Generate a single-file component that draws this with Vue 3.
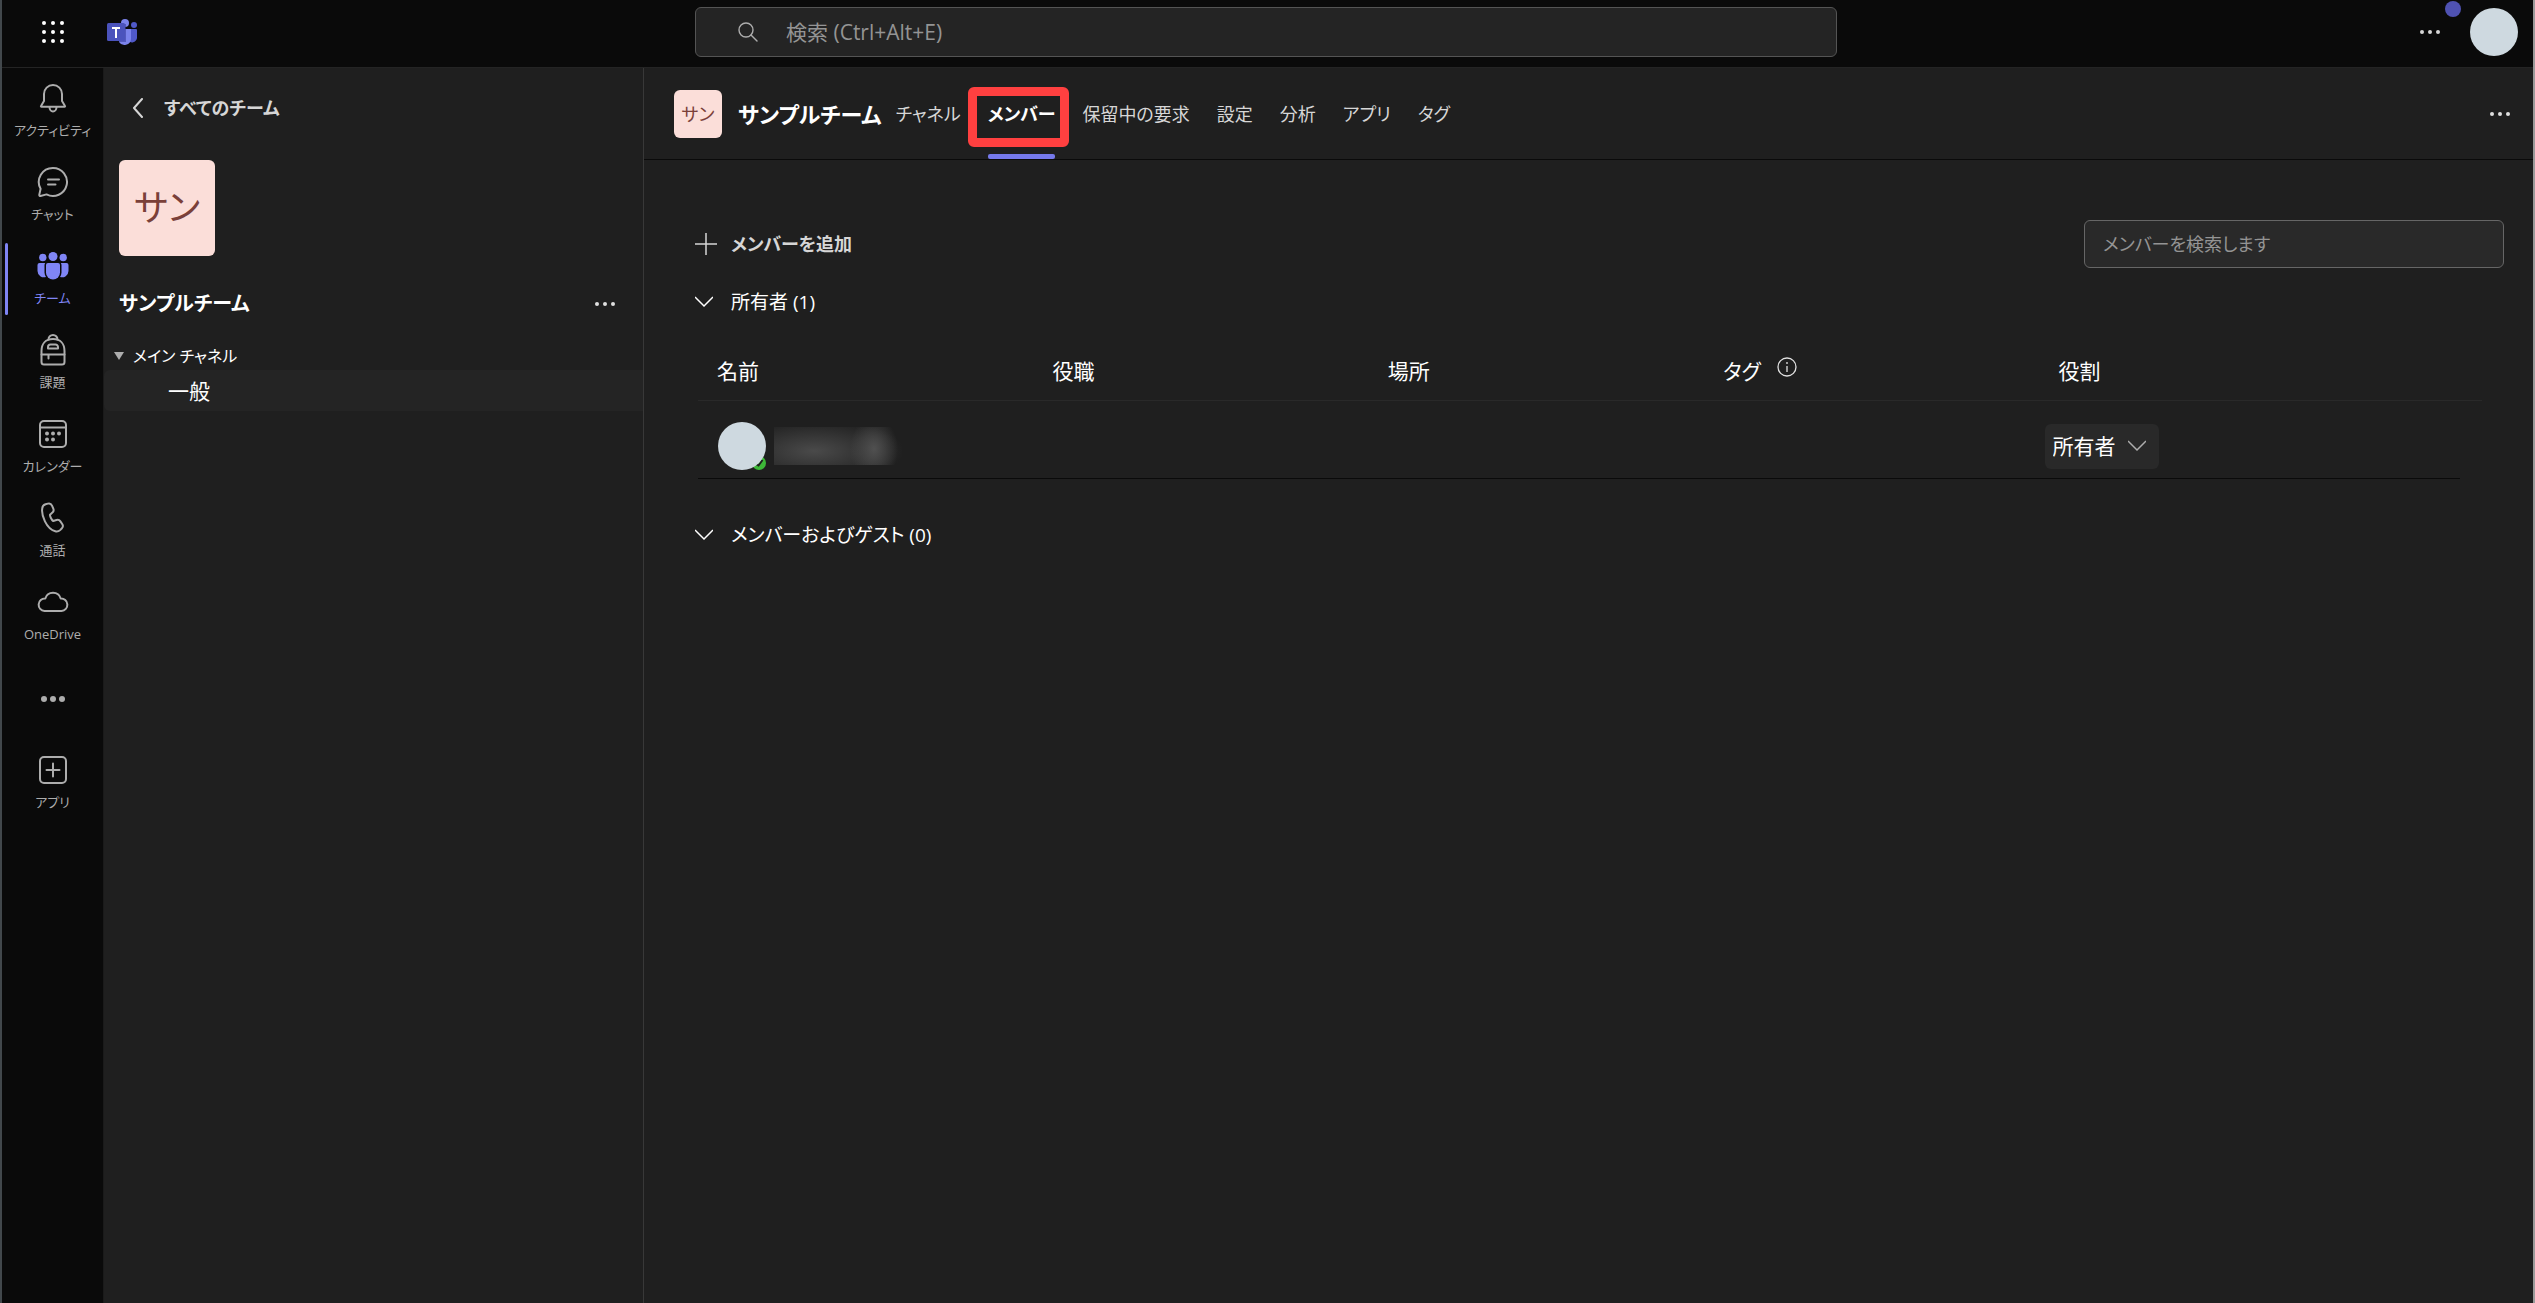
<template>
  <div class="app">
    <header class="topbar">
      <div class="topbar-left">
        <button class="icon-btn waffle" aria-label="アプリ起動ツール">
          <svg width="24" height="24" viewBox="0 0 24 24" fill="#fff">
            <template v-for="y in [3, 12, 21]" :key="y">
              <circle v-for="x in [3, 12, 21]" :key="x" :cx="x" :cy="y" r="2" />
            </template>
          </svg>
        </button>
        <svg class="logo" width="30" height="28" viewBox="0 0 30 28">
          <circle cx="27" cy="7" r="3" fill="#5059c9" />
          <path d="M20 11h9a1 1 0 0 1 1 1v7a5 5 0 0 1-7 5z" fill="#5059c9" />
          <circle cx="18" cy="5" r="4" fill="#7b83eb" />
          <path d="M12 11h12v10a6.500 6.500 0 0 1-12 3z" fill="#7b83eb" />
          <rect x="12" y="6" width="7" height="18" fill="#3a3f9e" opacity="0.6" />
          <rect x="0" y="5" width="18" height="18" rx="1.500" fill="#4b53bc" />
          <path d="M5 9h8v2h-3v9H8v-9H5z" fill="#fff" />
        </svg>
      </div>
      <label class="search">
        <svg width="20" height="20" viewBox="0 0 20 20" fill="none" stroke="#adadad" stroke-width="1.400">
          <circle cx="8" cy="8" r="7" />
          <path d="M13 13l6 6" stroke-linecap="round" />
        </svg>
        <input type="text" placeholder="検索 (Ctrl+Alt+E)" aria-label="検索" />
      </label>
      <div class="topbar-right">
        <button class="icon-btn" aria-label="設定など">
          <svg width="20" height="6" viewBox="0 0 20 6" fill="#d6d6d6">
            <circle cx="2" cy="3" r="2" /><circle cx="10" cy="3" r="2" /><circle cx="18" cy="3" r="2" />
          </svg>
        </button>
        <button class="icon-btn me" aria-label="プロファイル"></button>
        <span class="notice-dot"></span>
      </div>
    </header>

    <div class="body">
      <nav class="rail">
        <a
          v-for="item in railItems"
          :key="item.id"
          href="#"
          class="rail-item"
          :class="{ active: item.id === 'teams' }"
          :aria-label="item.label || 'その他'"
        >
          <svg width="32" height="32" viewBox="0 0 32 32" fill="none" stroke="currentColor" stroke-width="2" stroke-linecap="round" stroke-linejoin="round">
            <g v-if="item.id === 'activity'">
              <path d="M7 12a9 9 0 0 1 18 0v7l3 5a.5.500 0 0 1-.5.800h-23A.5.500 0 0 1 4 24l3-5z" />
              <path d="M12.500 25a3.500 4.500 0 0 0 7 0" />
            </g>
            <g v-else-if="item.id === 'chat'">
              <path d="M16 2a14 14 0 1 1-6.500 26.400L3.500 30a1 1 0 0 1-1.200-1.200l1.300-6A14 14 0 0 1 16 2z" />
              <path d="M11 13.500h11M11 18.500h7.500" />
            </g>
            <g v-else-if="item.id === 'teams'" fill="currentColor" stroke="none">
              <circle cx="16" cy="6.500" r="4.500" />
              <circle cx="5.800" cy="7.500" r="3.700" />
              <circle cx="26.200" cy="7.500" r="3.700" />
              <path d="M11 13h10a2 2 0 0 1 2 2v7.500a7 7 0 0 1-14 0V15a2 2 0 0 1 2-2z" />
              <path d="M2.500 13h5.700a4 4 0 0 0-.700 2v7.500a8.500 8.500 0 0 0 1.500 4.500A6.500 6.500 0 0 1 .5 21v-6a2 2 0 0 1 2-2z" />
              <path d="M29.500 13h-5.700a4 4 0 0 1 .7 2v7.500a8.500 8.500 0 0 1-1.500 4.500 6.500 6.500 0 0 0 8.500-6v-6a2 2 0 0 0-2-2z" />
            </g>
            <g v-else-if="item.id === 'tasks'">
              <path d="M4.500 17c0-7 4-12 11.500-12s11.500 5 11.500 12v11a2.500 2.500 0 0 1-2.500 2.500H7A2.500 2.500 0 0 1 4.500 28z" />
              <path d="M11.500 5.500a4.500 4.500 0 0 1 9 0M4.500 20.500h23M11.500 20.500v4" />
              <path d="M13.500 10.500h5a2.500 2.500 0 0 1 2.500 2.500v1.500H11V13a2.500 2.500 0 0 1 2.500-2.500z" />
            </g>
            <g v-else-if="item.id === 'calendar'">
              <rect x="3" y="3" width="26" height="26" rx="4" />
              <path d="M3 9.500h26" />
              <g fill="currentColor" stroke="none">
                <circle cx="10" cy="15.500" r="2" /><circle cx="16" cy="15.500" r="2" /><circle cx="22" cy="15.500" r="2" />
                <circle cx="10" cy="21.500" r="2" /><circle cx="16" cy="21.500" r="2" />
              </g>
            </g>
            <path
              v-else-if="item.id === 'calls'"
              d="M8.500 2.300l2.300-.7a3.500 3.500 0 0 1 4.200 2l1.300 3a3.500 3.500 0 0 1-.9 4l-2.400 2.200c-.5.500 1.500 5.300 3.200 6.200l3.300-1a3.500 3.500 0 0 1 3.900 1.400l1.800 2.600a3.500 3.500 0 0 1-.5 4.500l-1.600 1.600a5 5 0 0 1-4.800 1.200C9 26.500 4.300 13 5.200 6.800a5 5 0 0 1 3.300-4.500z"
            />
            <path
              v-else-if="item.id === 'onedrive'"
              d="M8.300 12.500a8 8 0 0 1 15.400 0 6.200 6.200 0 0 1 .8 12.500h-17a6.200 6.200 0 0 1 .8-12.500z"
            />
            <g v-else-if="item.id === 'more'" fill="currentColor" stroke="none">
              <circle cx="7" cy="16" r="3" /><circle cx="16" cy="16" r="3" /><circle cx="25" cy="16" r="3" />
            </g>
            <g v-else>
              <rect x="3" y="3" width="26" height="26" rx="4" />
              <path d="M16 9.500v13M9.500 16h13" />
            </g>
          </svg>
          <span v-if="item.label">{{ item.label }}</span>
        </a>
      </nav>

      <aside class="side">
        <button class="back">
          <svg width="12" height="20" viewBox="0 0 12 20" fill="none" stroke="#d6d6d6" stroke-width="2" stroke-linecap="round" stroke-linejoin="round">
            <path d="M10 1L2 10l8 9" />
          </svg>
          <span>すべてのチーム</span>
        </button>
        <div class="team-avatar large">サン</div>
        <div class="team-row">
          <h2>サンプルチーム</h2>
          <button class="icon-btn" aria-label="その他のオプション">
            <svg width="20" height="6" viewBox="0 0 20 6" fill="#e0e0e0">
              <circle cx="2" cy="3" r="2" /><circle cx="10" cy="3" r="2" /><circle cx="18" cy="3" r="2" />
            </svg>
          </button>
        </div>
        <button class="group">
          <svg width="10" height="8" viewBox="0 0 10 8" fill="#adadad"><path d="M0 0h10L5 8z" /></svg>
          <span>メイン チャネル</span>
        </button>
        <a href="#" class="channel">一般</a>
      </aside>

      <main class="main">
        <div class="team-header">
          <div class="team-avatar">サン</div>
          <h1>サンプルチーム</h1>
          <nav class="tabs">
            <a v-for="tab in tabs" :key="tab" href="#" class="tab" :class="{ selected: tab === currentTab }">{{ tab }}</a>
          </nav>
          <button class="icon-btn header-more" aria-label="その他のオプション">
            <svg width="20" height="6" viewBox="0 0 20 6" fill="#e0e0e0">
              <circle cx="2" cy="3" r="2" /><circle cx="10" cy="3" r="2" /><circle cx="18" cy="3" r="2" />
            </svg>
          </button>
        </div>

        <div class="content">
          <div class="toolbar">
            <button class="add">
              <svg width="22" height="22" viewBox="0 0 22 22" fill="none" stroke="#d6d6d6" stroke-width="1.500">
                <path d="M11 0v22M0 11h22" />
              </svg>
              <span>メンバーを追加</span>
            </button>
            <input class="member-search" type="text" placeholder="メンバーを検索します" aria-label="メンバーを検索します" />
          </div>

          <button class="section-toggle">
            <svg width="18" height="12" viewBox="0 0 18 12" fill="none" stroke="#fff" stroke-width="1.500"><path d="M0 1l9 9 9-9" /></svg>
            <span>所有者 (1)</span>
          </button>

          <table class="members">
            <thead>
              <tr>
                <th v-for="col in columns" :key="col">
                  <span class="th-inner">
                    {{ col }}
                    <svg v-if="col === 'タグ'" width="20" height="20" viewBox="0 0 20 20" fill="none" stroke="#e0e0e0" stroke-width="1.300">
                      <circle cx="10" cy="10" r="9" />
                      <path d="M10 9v6M10 5v2" />
                    </svg>
                  </span>
                </th>
              </tr>
            </thead>
            <tbody>
              <tr>
                <td>
                  <div class="person">
                    <svg width="48" height="48" viewBox="0 0 48 48">
                      <circle cx="41" cy="41" r="7" fill="#3db838" />
                      <path d="M38 42l2.500 1.500 4-5.500" fill="none" stroke="#1f1f1f" stroke-width="2" />
                      <circle cx="24" cy="24" r="24" fill="#ced9e0" />
                    </svg>
                    <span class="hidden-name"></span>
                  </div>
                </td>
                <td></td>
                <td></td>
                <td></td>
                <td>
                  <span class="role">
                    <select aria-label="役割">
                      <option>所有者</option>
                      <option>メンバー</option>
                    </select>
                    <svg width="18" height="12" viewBox="0 0 18 12" fill="none" stroke="#adadad" stroke-width="1.500"><path d="M0 1l9 9 9-9" /></svg>
                  </span>
                </td>
              </tr>
            </tbody>
          </table>

          <button class="section-toggle">
            <svg width="18" height="12" viewBox="0 0 18 12" fill="none" stroke="#fff" stroke-width="1.500"><path d="M0 1l9 9 9-9" /></svg>
            <span>メンバーおよびゲスト (0)</span>
          </button>
        </div>
      </main>
    </div>
  </div>
</template>

<script setup>
import { ref } from 'vue'

const railItems = [
  { id: 'activity', label: 'アクティビティ' },
  { id: 'chat', label: 'チャット' },
  { id: 'teams', label: 'チーム' },
  { id: 'tasks', label: '課題' },
  { id: 'calendar', label: 'カレンダー' },
  { id: 'calls', label: '通話' },
  { id: 'onedrive', label: 'OneDrive' },
  { id: 'more', label: '' },
  { id: 'apps', label: 'アプリ' }
]

const tabs = ['チャネル', 'メンバー', '保留中の要求', '設定', '分析', 'アプリ', 'タグ']
const currentTab = ref('メンバー')

const columns = ['名前', '役職', '場所', 'タグ', '役割']
</script>

<style>
body {
  background: #1f1f1f;
}
</style>

<style scoped>
.app {
  box-sizing: border-box;
  min-height: 100vh;
  display: flex;
  flex-direction: column;
  border-left: 2px solid #42484c;
  border-right: 2px solid #9a9a9a;
  background: #1f1f1f;
  color: #fff;
  font-family: 'Open Sans', 'Noto Sans CJK JP', sans-serif;
  font-size: 21px;
  line-height: 28px;
  font-feature-settings: 'palt';
}

.app *,
.app *::before,
.app *::after {
  box-sizing: border-box;
}

button,
input,
select {
  font: inherit;
  font-feature-settings: inherit;
  color: inherit;
  background: none;
  border: 0;
  padding: 0;
  margin: 0;
}

a {
  color: inherit;
  text-decoration: none;
}

h1,
h2 {
  margin: 0;
}

svg {
  display: block;
  flex: none;
}

.icon-btn {
  display: flex;
  align-items: center;
  justify-content: center;
}

/* 上部バー */
.topbar {
  height: 68px;
  display: flex;
  align-items: center;
  background: #0a0a0a;
  border-bottom: 1px solid #242424;
  padding-bottom: 3px;
}

.topbar-left {
  flex: 0 0 693px;
  display: flex;
  align-items: center;
}

.waffle {
  width: 101px;
  height: 48px;
}

.logo {
  margin-left: 4px;
}

.search {
  width: calc(45% + 3px);
  height: 50px;
  display: flex;
  align-items: center;
  gap: 28px;
  padding: 0 42px;
  background: #242424;
  border: 1px solid #545454;
  border-radius: 6px;
}

.search input {
  flex: 1;
  outline: none;
}

input::placeholder {
  color: #949494;
  opacity: 1;
}

.topbar-right {
  position: relative;
  margin-left: auto;
  display: flex;
  align-items: center;
  gap: 30px;
  padding-right: 15px;
}

.me {
  width: 48px;
  height: 48px;
  border-radius: 50%;
  background: #ced9e0;
}

.notice-dot {
  position: absolute;
  top: -7px;
  right: 72px;
  width: 16px;
  height: 16px;
  border-radius: 50%;
  background: #4f52b2;
}

.body {
  flex: 1;
  display: flex;
}

/* アプリバー */
.rail {
  flex: 0 0 102px;
  background: #0a0a0a;
  border-right: 1px solid #1a1a1a;
  padding-top: 1px;
}

.rail-item {
  position: relative;
  height: 84px;
  display: flex;
  flex-direction: column;
  align-items: center;
  justify-content: center;
  gap: 6px;
  color: #adadad;
  font-size: 13px;
  line-height: 20px;
  white-space: nowrap;
}

.rail-item.active {
  color: #7f85f5;
}

.rail-item.active::before {
  content: '';
  position: absolute;
  left: 3px;
  top: 6px;
  bottom: 6px;
  width: 3px;
  border-radius: 2px;
  background: #7f85f5;
}

/* チーム一覧 */
.side {
  flex: 0 0 540px;
  border-right: 1px solid #383838;
}

.back {
  display: flex;
  align-items: center;
  gap: 20px;
  margin: 26px 0 0 28px;
  color: #d6d6d6;
  font-size: 18px;
  font-weight: 700;
}

.team-avatar {
  flex: none;
  width: 48px;
  height: 48px;
  display: flex;
  align-items: center;
  justify-content: center;
  border-radius: 6px;
  background: #fbded9;
  color: #7a4039;
  font-size: 18px;
}

.team-avatar.large {
  width: 96px;
  height: 96px;
  margin: 38px 0 0 15px;
  font-size: 36px;
}

.team-row {
  display: flex;
  align-items: center;
  justify-content: space-between;
  margin-top: 34px;
  padding: 0 28px 0 15px;
}

.team-row h2 {
  font-size: 20px;
  font-weight: 700;
}

.group {
  display: flex;
  align-items: center;
  gap: 9px;
  margin: 24px 0 0 10px;
  font-size: 16px;
}

.channel {
  display: block;
  height: 41px;
  padding-left: 64px;
  background: #242424;
  border-radius: 6px 0 0 6px;
  line-height: 42px;
}

/* メイン */
.main {
  flex: 1;
  min-width: 0;
}

.team-header {
  height: 92px;
  display: flex;
  align-items: center;
  padding: 0 23px 0 30px;
  border-bottom: 1px solid #0a0a0a;
}

h1 {
  margin-left: 16px;
  font-size: 22px;
  font-weight: 700;
}

.tabs {
  align-self: stretch;
  display: flex;
  gap: 27px;
  margin-left: 14px;
}

.tab {
  position: relative;
  display: flex;
  align-items: center;
  color: #d6d6d6;
  font-size: 18px;
}

.tab.selected {
  color: #fff;
  font-weight: 700;
}

.tab.selected::before {
  content: '';
  position: absolute;
  left: -20px;
  right: -14px;
  top: 19px;
  height: 60px;
  border: 9px solid #ff4040;
  border-radius: 6px;
}

.tab.selected::after {
  content: '';
  position: absolute;
  left: 0;
  right: 0;
  bottom: 0;
  height: 5px;
  border-radius: 2px;
  background: #7579eb;
}

.header-more {
  margin-left: auto;
}

.content {
  padding: 60px 29px 0 51px;
}

.toolbar {
  display: flex;
  align-items: center;
  justify-content: space-between;
}

.add {
  display: flex;
  align-items: center;
  gap: 14px;
  color: #d6d6d6;
  font-size: 18px;
  font-weight: 700;
}

.member-search {
  width: 420px;
  height: 48px;
  padding: 0 18px;
  background: #292929;
  border: 1px solid #666;
  border-radius: 6px;
  font-size: 18px;
}

.section-toggle {
  display: flex;
  align-items: center;
  gap: 18px;
  font-size: 19px;
}

.toolbar + .section-toggle {
  margin-top: 20px;
}

.members {
  width: calc(100% - 25px);
  margin: 25px 0 42px 3px;
  border-collapse: collapse;
  table-layout: fixed;
}

th {
  width: 18.8%;
  height: 59px;
  padding: 2px 0 0 19px;
  border-bottom: 1px solid #292929;
  font-weight: 400;
  text-align: left;
}

th:last-child {
  width: auto;
}

td {
  height: 79px;
  padding: 13px 0 0 20px;
  background: linear-gradient(#0a0a0a, #0a0a0a) left bottom / 100% 1px no-repeat;
}

td:last-child {
  padding-left: 5px;
  background-size: calc(100% - 22px) 1px;
}

.th-inner {
  display: flex;
  align-items: flex-start;
  gap: 16px;
}

.person {
  display: flex;
  align-items: center;
  gap: 8px;
}

.hidden-name {
  width: 128px;
  height: 38px;
  background:
    radial-gradient(ellipse 24px 32px at 100px 22px, #505050, transparent),
    radial-gradient(ellipse 90px 32px at 40px 24px, #4a4a4a, transparent);
}

.role {
  position: relative;
  display: inline-flex;
  align-items: center;
  vertical-align: middle;
}

.role select {
  appearance: none;
  width: 114px;
  height: 45px;
  padding: 0 42px 0 8px;
  border-radius: 6px;
  background: #292929;
}

.role svg {
  position: absolute;
  right: 13px;
  pointer-events: none;
}
</style>
